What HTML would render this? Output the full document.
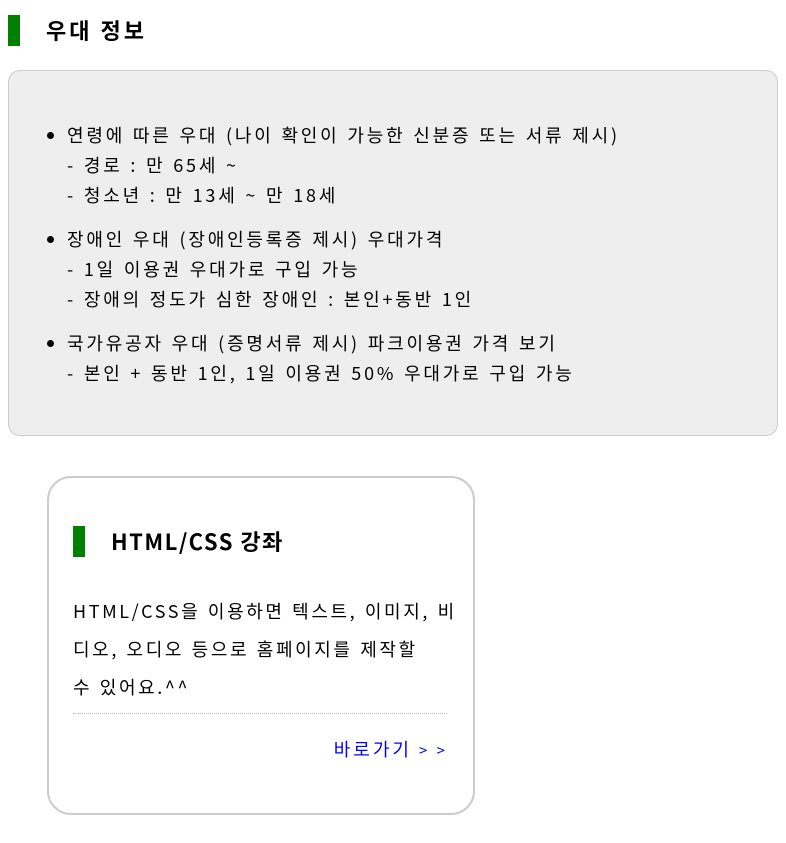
<!DOCTYPE html>
<html><head><meta charset="utf-8"><style>
body{margin:0;font-family:"Noto Sans CJK KR","Liberation Sans",sans-serif;color:#000;background:#fff;}
.h{position:absolute;left:8px;top:15px;height:31px;border-left:12px solid #008000;padding-left:26px;font-size:22px;font-weight:bold;line-height:31px;letter-spacing:3px;}
.box{position:absolute;left:8px;top:70px;width:768px;height:364px;background:#eee;border:1px solid #ccc;border-radius:12px;}
ul{margin:0;padding:0;position:absolute;left:58px;top:49px;font-size:18px;line-height:30px;letter-spacing:2.8px;word-spacing:1px;white-space:nowrap;}
li{margin-bottom:14px;}
.card{position:absolute;left:47px;top:476px;width:424px;height:335px;border:2px solid #ccc;border-radius:24px;}
.ct{position:absolute;left:24px;top:48px;height:31px;border-left:12px solid #008000;padding-left:26px;font-size:22px;font-weight:bold;line-height:31px;letter-spacing:1.5px;}
.p{position:absolute;left:24px;top:114px;font-size:18px;line-height:38px;letter-spacing:2.6px;word-spacing:1px;white-space:nowrap;}
.hr{position:absolute;left:24px;top:235px;width:374px;border-top:1px dotted #bbb;}
.a{position:absolute;right:25px;top:256px;color:#00f;font-size:18px;line-height:30px;letter-spacing:3px;}
</style></head><body>
<div class="h">우대 정보</div>
<div class="box"><ul>
<li>연령에 따른 우대 (나이 확인이 가능한 신분증 또는 서류 제시)<br>- 경로 : 만 65세 ~<br>- 청소년 : 만 13세 ~ 만 18세</li>
<li>장애인 우대 (장애인등록증 제시) 우대가격<br>- 1일 이용권 우대가로 구입 가능<br>- 장애의 정도가 심한 장애인 : 본인+동반 1인</li>
<li>국가유공자 우대 (증명서류 제시) 파크이용권 가격 보기<br>- 본인 + 동반 1인, 1일 이용권 50% 우대가로 구입 가능</li>
</ul></div>
<div class="card">
<div class="ct">HTML/CSS 강좌</div>
<div class="p">HTML/CSS을 이용하면 텍스트, 이미지, 비<br>디오, 오디오 등으로 홈페이지를 제작할<br>수 있어요.^^</div>
<div class="hr"></div>
<div class="a">바로가기 <span style="font-size:15px">&gt; &gt;</span></div>
</div>
</body></html>
